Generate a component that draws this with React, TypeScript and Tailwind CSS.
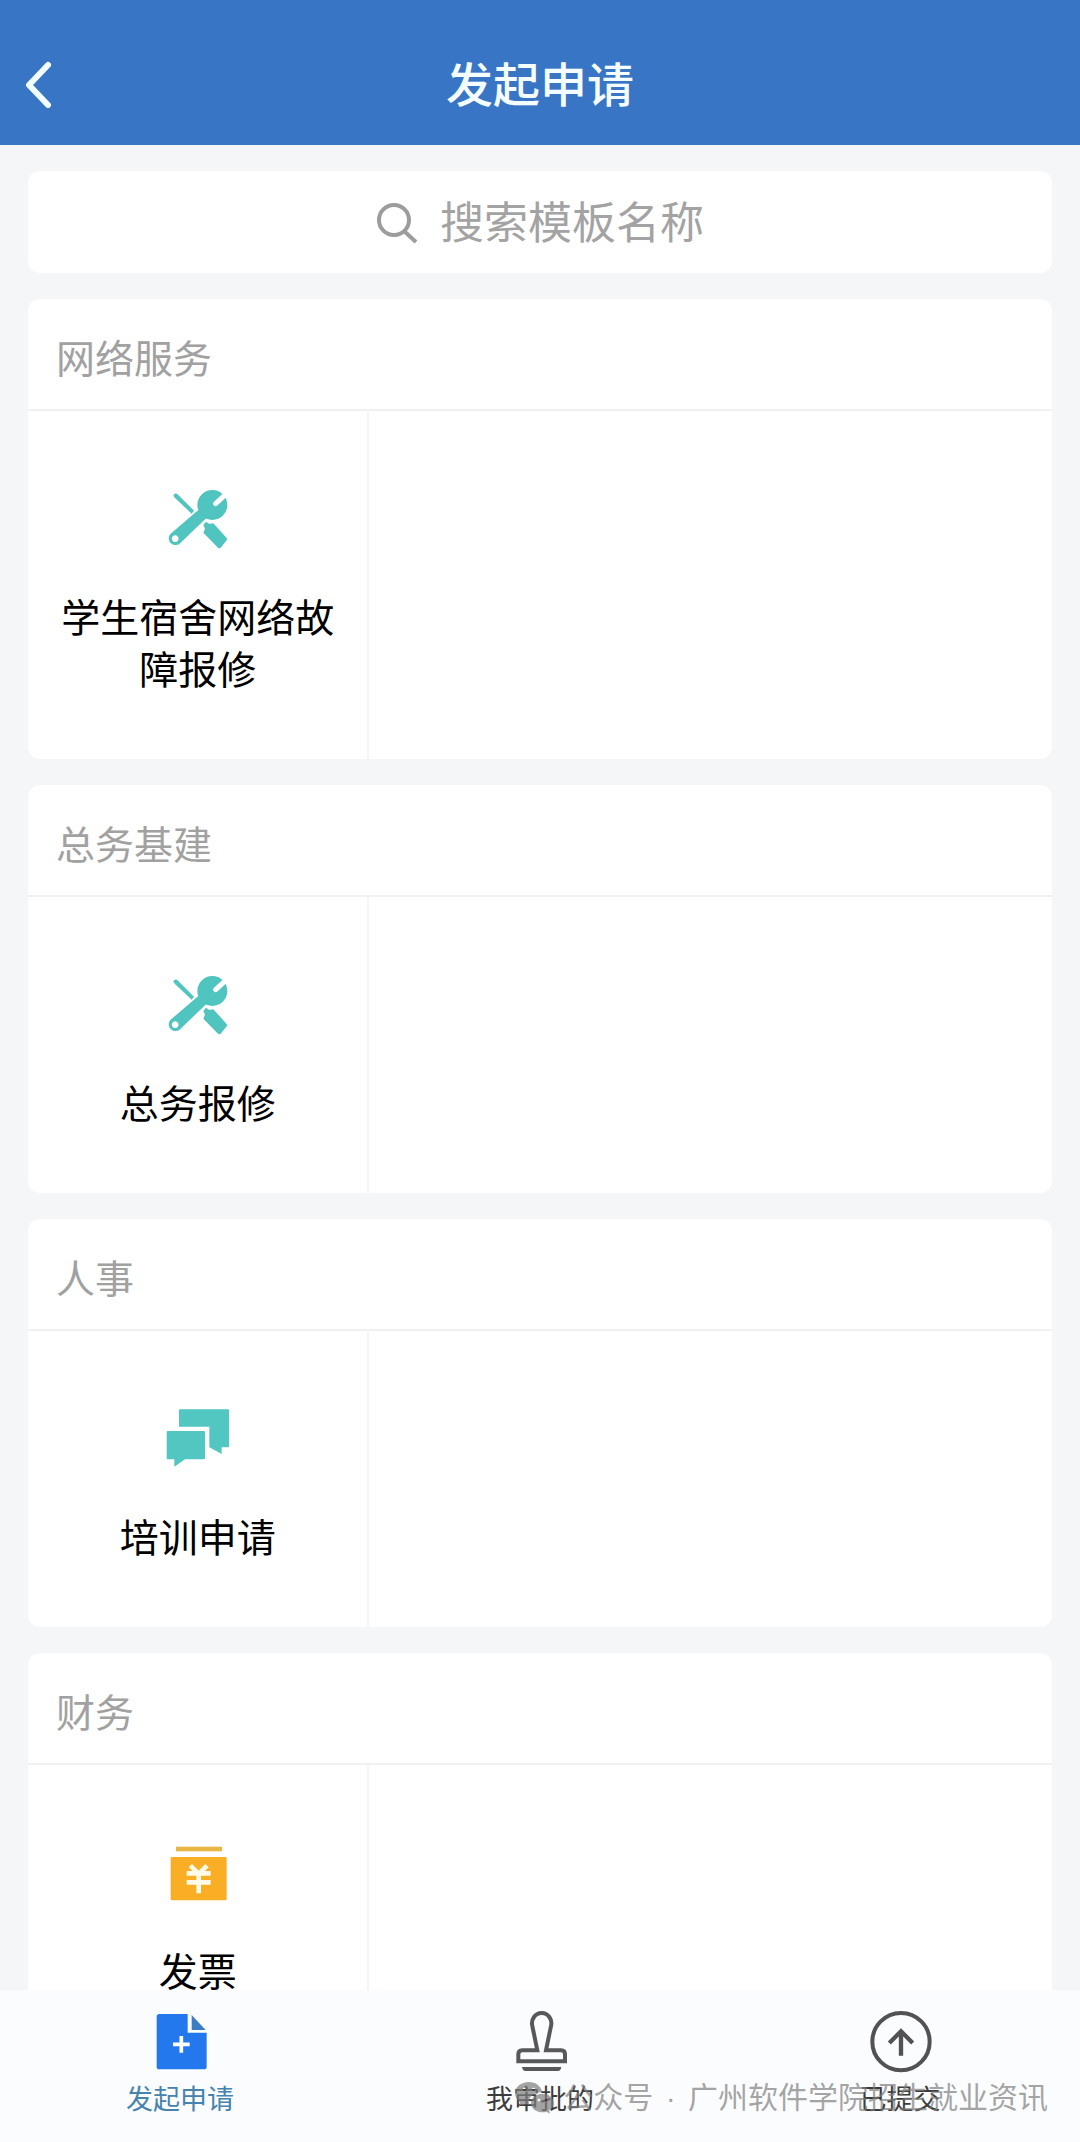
import React, { useState, type ReactNode } from 'react';

interface Template {
    name: string;
    icon: ReactNode;
}

interface TemplateGroup {
    title: string;
    templates: Template[];
}

interface Tab {
    id: string;
    label: string;
    icon: ReactNode;
}

const ToolsIcon = () => (
    <svg viewBox="0 0 192 192" className="w-16 h-16 text-[#50c4be]" fill="currentColor" aria-hidden="true">
        <path d="M22 26 Q24 17 33 20 L84 71 L77 80 L27 33 Z" />
        <circle cx="139" cy="54" r="45" />
        <path fillRule="evenodd" d="M97 69 L121 93 L44 167 A20 20 0 1 1 13 141 Z M27 145 a10 10 0 1 0 1 0 Z" />
        <path d="M149 50 L188 14" stroke="#fff" strokeWidth="15" strokeLinecap="round" />
        <path d="M112 114 L120 104 L130 111 L142 109 L182 153 Q185 157 182 160 L164 182 Q160 186 156 182 L112 137 L117 125 Z" />
    </svg>
);

const ChatIcon = () => (
    <svg viewBox="0 0 192 192" className="w-16 h-16 text-[#52c6c1]" fill="currentColor" aria-hidden="true">
        <path d="M42 7h144q3 0 3 3v108q0 3-3 3h-19v20l-37-20V59H39V10q0-3 3-3z" />
        <path d="M5 72h109q3 0 3 3v79q0 3-3 3H57l-32 22v-22H5q-3 0-3-3V75q0-3 3-3z" />
    </svg>
);

const InvoiceIcon = () => (
    <svg viewBox="0 0 192 192" className="w-16 h-16" aria-hidden="true">
        <rect x="30" y="17" width="138" height="14" fill="#e9b545" />
        <rect x="14" y="48" width="168" height="130" rx="4" fill="#f9ae26" />
        <path d="M73 74l25 25 25-25M62 97h72M62 124h72M98 97v60" fill="none" stroke="#fffbe8" strokeWidth="14" />
    </svg>
);

const NewDocIcon = () => (
    <svg viewBox="0 0 192 192" className="w-16 h-16" aria-hidden="true">
        <path d="M34 12h85v56h57v102q0 8-8 8H34q-8 0-8-8V20q0-8 8-8z" fill="#2478ee" />
        <path d="M131 15l42 45h-42z" fill="#3c7cc4" />
        <path d="M75 103h50M100 78v50" stroke="#fff" strokeWidth="11" />
    </svg>
);

const StampIcon = () => (
    <svg viewBox="0 0 192 192" className="w-16 h-16 text-[#58585a]" aria-hidden="true">
        <path
            d="M88 121L73 48A29 31 0 1 1 129 48L114 121h45q12 0 12 12v21H31v-21q0-12 12-12z"
            fill="none"
            stroke="currentColor"
            strokeWidth="12"
        />
        <path d="M42 171h118q-2 12-10 12H52q-8 0-10-12z" fill="currentColor" />
    </svg>
);

const SubmittedIcon = () => (
    <svg viewBox="0 0 192 192" className="w-16 h-16 text-[#525254]" fill="none" stroke="currentColor" strokeWidth="12" aria-hidden="true">
        <circle cx="99" cy="95" r="86" />
        <path d="M64 99l35-35 35 35M99 66v71" strokeWidth="13" />
    </svg>
);

const WechatIcon = () => (
    <svg viewBox="0 0 120 96" className="w-10 h-8" fill="currentColor" aria-hidden="true">
        <path
            fillRule="evenodd"
            d="M42 0C18 0 0 15 0 34c0 11 6 20 15 26l-4 13 15-8c5 1 10 2 16 2-4-21 14-37 40-36C78 12 62 0 42 0z M28 17a5 5 0 1 0 1 0z M55 17a5 5 0 1 0 1 0z"
        />
        <path
            fillRule="evenodd"
            d="M82 35c-19 0-34 12-34 28s15 28 34 28c4 0 8-1 12-2l11 6-3-10c9-5 14-13 14-22 0-16-15-28-34-28z M71 50a4 4 0 1 0 1 0z M93 50a4 4 0 1 0 1 0z"
        />
    </svg>
);

const groups: TemplateGroup[] = [
    { title: '网络服务', templates: [{ name: '学生宿舍网络故障报修', icon: <ToolsIcon /> }] },
    { title: '总务基建', templates: [{ name: '总务报修', icon: <ToolsIcon /> }] },
    { title: '人事', templates: [{ name: '培训申请', icon: <ChatIcon /> }] },
    { title: '财务', templates: [{ name: '发票', icon: <InvoiceIcon /> }] },
];

const tabs: Tab[] = [
    { id: 'create', label: '发起申请', icon: <NewDocIcon /> },
    { id: 'approve', label: '我审批的', icon: <StampIcon /> },
    { id: 'submitted', label: '已提交', icon: <SubmittedIcon /> },
];

const Header = () => (
    <header className="shrink-0 bg-[#3875c5] pt-6">
        <div className="relative flex items-center justify-center h-[121px]">
            <button type="button" aria-label="返回" className="absolute left-4 p-2 cursor-pointer">
                <svg viewBox="0 0 32 48" className="w-8 h-12" fill="none" stroke="#f2fdff" strokeWidth="6" strokeLinecap="round" strokeLinejoin="round" aria-hidden="true">
                    <path d="M24 4L5 24l19 20" />
                </svg>
            </button>
            <h1 className="text-[47px] leading-[64px] pb-1.5 font-medium text-[#f4fdff]">发起申请</h1>
        </div>
    </header>
);

const SearchBox = ({ value, onChange }: { value: string; onChange: (value: string) => void }) => (
    <label className="flex items-center justify-center gap-5 h-[102px] rounded-xl bg-white cursor-text">
        <svg viewBox="0 0 44 44" className="w-11 h-11" fill="none" stroke="#9c9c9c" strokeWidth="4" aria-hidden="true">
            <circle cx="18" cy="20" r="15" />
            <path d="M28 31l12 11" />
        </svg>
        <input
            type="text"
            aria-label="搜索模板名称"
            placeholder="搜索模板名称"
            value={value}
            onChange={(e) => onChange(e.target.value)}
            className="w-[264px] h-16 pb-1 bg-transparent outline-none text-[44px] text-black placeholder:text-[#a3a3a3]"
        />
    </label>
);

const GroupCard = ({ group }: { group: TemplateGroup }) => (
    <section className="rounded-xl bg-white overflow-hidden">
        <h2 className="h-28 px-7 pt-1 flex items-center border-b-2 border-[#f0f1f2] text-[39px] text-[#a1a1a1]">{group.title}</h2>
        <div className="grid grid-cols-3">
            {group.templates.map((template) => (
                <button
                    key={template.name}
                    type="button"
                    className="flex flex-col items-center gap-[38px] px-8 pt-[76px] pb-[66px] border-r-2 border-[#f3f5f6] cursor-pointer"
                >
                    {template.icon}
                    <span className="text-[39px] leading-[52px] text-black">{template.name}</span>
                </button>
            ))}
        </div>
    </section>
);

export default function App() {
    const [keyword, setKeyword] = useState('');
    const [activeTab, setActiveTab] = useState('create');

    const visibleGroups = groups
        .map((group) => ({ ...group, templates: group.templates.filter((t) => t.name.includes(keyword.trim())) }))
        .filter((group) => group.templates.length > 0);

    return (
        <div className="flex flex-col h-screen bg-[#f4f6f8] font-['Noto_Sans_CJK_SC',sans-serif]">
            <Header />

            <main className="flex-1 min-h-0 overflow-y-auto [scrollbar-width:none] flex flex-col gap-[26px] px-7 pt-[26px] *:shrink-0">
                <SearchBox value={keyword} onChange={setKeyword} />
                {visibleGroups.map((group) => (
                    <GroupCard key={group.title} group={group} />
                ))}
            </main>

            <nav className="relative shrink-0 grid grid-cols-3 bg-[#fbfcfe] pt-5 pb-6">
                {tabs.map((tab) => (
                    <button
                        key={tab.id}
                        type="button"
                        onClick={() => setActiveTab(tab.id)}
                        className={`flex flex-col items-center gap-1 cursor-pointer ${activeTab === tab.id ? 'text-[#4683ae]' : 'text-[#3c3c3c]'}`}
                    >
                        {tab.icon}
                        <span className="text-[27px] leading-10">{tab.label}</span>
                    </button>
                ))}
                {/* account signature, sits over the tab labels */}
                <div className="absolute right-8 bottom-6 flex items-center gap-2 text-[#7d7d7d]/70 pointer-events-none">
                    <WechatIcon />
                    <span className="font-['Liberation_Sans','Noto_Sans_CJK_SC',sans-serif] text-[30px] leading-10 whitespace-nowrap">
                        公众号 <span className="mx-1">·</span> 广州软件学院招生就业资讯
                    </span>
                </div>
            </nav>
        </div>
    );
}
